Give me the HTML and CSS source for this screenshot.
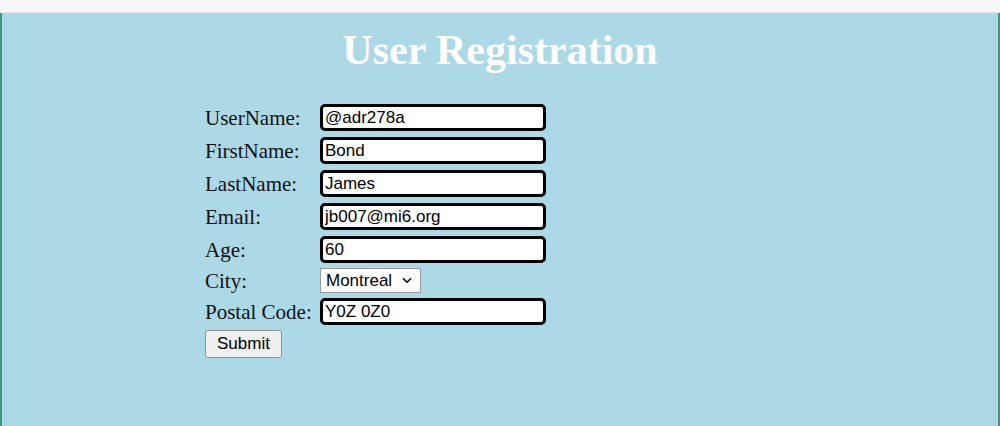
FILE: index.html
```html
<!DOCTYPE html>
<html>
<head>
<meta charset="utf-8">
<link rel="stylesheet" href="styles.css">
</head>
<body>
<div class="topbar"></div>
<main class="page">
  <h1 class="title">User Registration</h1>
  <form class="form">
    <label class="label" for="u">UserName:</label>
    <div class="cell"><input class="field" id="u" type="text" value="@adr278a"></div>
    <label class="label" for="f">FirstName:</label>
    <div class="cell"><input class="field" id="f" type="text" value="Bond"></div>
    <label class="label" for="l">LastName:</label>
    <div class="cell"><input class="field" id="l" type="text" value="James"></div>
    <label class="label" for="e">Email:</label>
    <div class="cell"><input class="field" id="e" type="text" value="jb007@mi6.org"></div>
    <label class="label" for="a">Age:</label>
    <div class="cell"><input class="field" id="a" type="text" value="60"></div>
    <label class="label" for="c">City:</label>
    <div class="cell cell-select">
      <span class="select-wrap">
        <select class="select" id="c"><option>Montreal</option></select>
        <svg class="chevron" width="10" height="7" viewBox="0 0 10 7"><path d="M1 1.2 L5 5.2 L9 1.2" fill="none" stroke="#000" stroke-width="1.6"/></svg>
      </span>
    </div>
    <label class="label" for="p">Postal Code:</label>
    <div class="cell"><input class="field" id="p" type="text" value="Y0Z 0Z0"></div>
    <div class="actions"><button class="submit" type="button">Submit</button></div>
  </form>
</main>
</body>
</html>
```
FILE: styles.css
```css
html, body {
  margin: 0;
  padding: 0;
  height: 100%;
}
body {
  background: #add8e6;
  font-family: "Liberation Serif", "Times New Roman", serif;
  display: flex;
  flex-direction: column;
}
.topbar {
  height: 12px;
  background: #f6f6f6;
  border-bottom: 1px solid #dfe6e6;
  flex: none;
}
.page {
  flex: 1;
  border-left: 2px solid #3f9a7a;
  border-right: 2px solid #3f9a7a;
  padding: 0 0 0 203px;
}
.title {
  margin: 12px 0 0 -203px;
  text-align: center;
  color: #fff;
  font-size: 42px;
  line-height: 50px;
  font-weight: bold;
}
.form {
  margin-top: 28px;
  display: grid;
  grid-template-columns: 115px 226px;
  row-gap: 4px;
  align-items: center;
}
.label {
  font-size: 21px;
  color: #111;
  line-height: 24px;
}
.cell {
  display: flex;
  align-items: center;
  min-height: 29px;
}
.cell-select {
  min-height: 25px;
}
.field {
  box-sizing: border-box;
  width: 226px;
  height: 27px;
  margin: 0;
  border: 3px solid #000;
  border-radius: 5px;
  padding: 0 2px;
  font-family: "Liberation Sans", Arial, sans-serif;
  font-size: 17px;
  color: #000;
  background: #fff;
  outline: none;
}
.select-wrap {
  position: relative;
  display: inline-flex;
}
.select {
  box-sizing: border-box;
  appearance: none;
  -webkit-appearance: none;
  width: 101px;
  height: 25px;
  margin: 0;
  border: 1px solid #9a9a9a;
  border-radius: 0;
  background: #fff;
  font-family: "Liberation Sans", Arial, sans-serif;
  font-size: 17px;
  padding: 0 0 0 5px;
  color: #000;
}
.chevron {
  position: absolute;
  right: 9px;
  top: 9px;
  pointer-events: none;
}
.actions {
  grid-column: 1 / -1;
  margin-top: 0;
}
.submit {
  box-sizing: border-box;
  width: 77px;
  height: 28px;
  font-family: "Liberation Sans", Arial, sans-serif;
  font-size: 17px;
  background: #efefef;
  border: 1px solid #8f8f8f;
  border-radius: 3px;
  color: #000;
  padding: 0;
}
```
